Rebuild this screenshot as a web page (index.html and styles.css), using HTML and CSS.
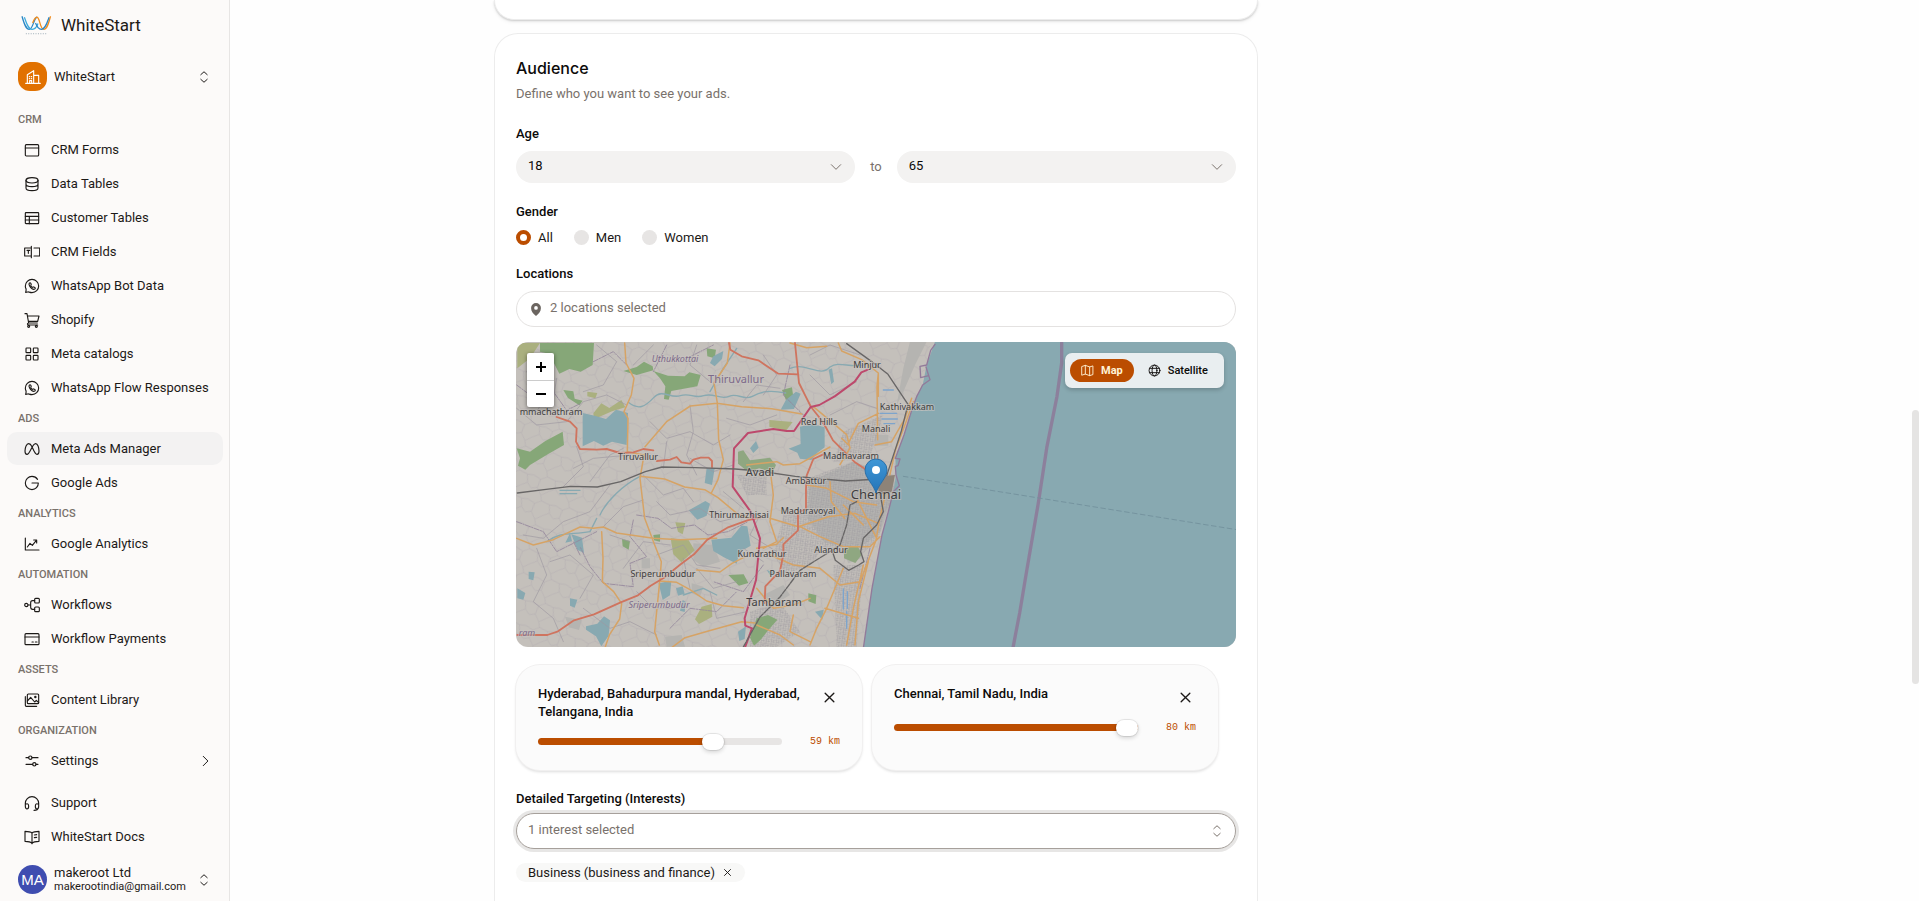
FILE: index.html
```html
<!DOCTYPE html>
<html lang="en">
<head>
<meta charset="utf-8">
<title>WhiteStart – Meta Ads Manager</title>
<link rel="stylesheet" href="styles.css">
</head>
<body>
<svg class="defs" aria-hidden="true">
  <symbol id="updown" viewBox="0 0 24 24"><path d="M17.500 8L12 3 6.500 8M17.500 16L12 21l-5.500-5"/></symbol>
  <symbol id="whatsapp" viewBox="0 0 24 24"><path d="M12 22c5.500 0 10-4.500 10-10S17.500 2 12 2 2 6.500 2 12c0 1.400.300 2.700.800 3.900.500 1.100.500 1.700.300 2.600L2.500 21.500l3-.600c.900-.200 1.500-.200 2.500.300 1.200.500 2.600.800 4 .800z"/><path d="M8.600 12.400c-.900-1.500-1.600-3-.800-4.400.700-1 1.800-1.200 2.300-.1l.700 1.600c.300.700-.7 1.400-.6 2 .4 1.100 1.400 2 2.400 2.500.7.200 1.300-.9 2-.6l1.600.8c1.100.500.8 1.600-.1 2.300-2.400 1.700-6-1.200-7.500-4.100z"/></symbol>
  <symbol id="close" viewBox="0 0 24 24"><path d="M4 4l16 16M20 4L4 20"/></symbol>
  <symbol id="down" viewBox="0 0 24 24"><path d="M4 8l8 8 8-8"/></symbol>
</svg>

<aside class="sidebar">
  <a class="brand" href="#">
    <svg class="brand-logo" viewBox="0 0 32 22" aria-hidden="true">
      <path d="M1 2C3 9 5 15.500 8.500 15.500c4 0 5-12.500 8-12.500" stroke="#2b86c5"/>
      <path d="M3.500 3c2 6 4 12.500 8 12.500 3 0 5-3 6-6" stroke="#39a9dc"/>
      <path d="M12 9c1.500-4 2.500-6 4.500-6" stroke="#f28c1c"/>
      <path d="M16.500 3c3 0 3 12.500 7 12.500 3.500 0 5-6.500 7-13.500" stroke="#f28c1c"/>
      <path d="M15 9c1.500 4 3.500 6.500 6 6.500 4 0 6-7 8-12.500" stroke="#2b86c5"/>
      <path d="M5 20h22" stroke="#9aa9b5" stroke-width="1" stroke-dasharray="1 1.500"/>
    </svg>
    <span>WhiteStart</span>
  </a>
  <button class="account" type="button">
    <span class="avatar avatar-org"><svg class="icon" viewBox="0 0 24 24" aria-hidden="true"><path d="M1 21.500h22M3.500 21.500V8.500L13 2.500v19M13 9.500h7.500v12M6.500 11.500h.5M9.500 11.500h.5M6.500 14.500h.5M9.500 14.500h.5M7 21v-3.500h3V21"/></svg></span>
    <span class="account-name">WhiteStart</span>
    <svg class="icon small" aria-hidden="true"><use href="#updown"/></svg>
  </button>

  <nav class="nav" aria-label="Main">
    <h2>CRM</h2>
    <a href="#"><svg class="icon" viewBox="0 0 24 24"><rect x="2" y="4" width="20" height="17" rx="1.500"/><path d="M2 9h20"/></svg>CRM Forms</a>
    <a href="#"><svg class="icon" viewBox="0 0 24 24"><ellipse cx="12" cy="6.500" rx="9" ry="4"/><path d="M3 6.500v5.500c0 2.200 4 4 9 4s9-1.800 9-4V6.500M3 12v6c0 2.200 4 4 9 4s9-1.800 9-4v-6"/></svg>Data Tables</a>
    <a href="#"><svg class="icon" viewBox="0 0 24 24"><rect x="2" y="4" width="20" height="16.500" rx="1"/><path d="M2 9.500h20M2 15h20M8 9.500v11"/></svg>Customer Tables</a>
    <a href="#"><svg class="icon" viewBox="0 0 24 24"><path d="M11 6H1v12h10M15 6h8.500v12H15M11 3.500v17M4.500 9.500h4M6.500 9.500v4.500"/></svg>CRM Fields</a>
    <a href="#"><svg class="icon" aria-hidden="true"><use href="#whatsapp"/></svg>WhatsApp Bot Data</a>
    <a href="#"><svg class="icon" viewBox="0 0 24 24"><path d="M1.500 2.500h3l2.500 14h13M5.500 6h17l-2 8H7M7 16.500c-2.500.3-2.500 3 0 3h13.500"/><circle cx="7" cy="21.500" r="1.500"/><circle cx="18.500" cy="21.500" r="1.500"/></svg>Shopify</a>
    <a href="#"><svg class="icon" viewBox="0 0 24 24"><rect x="3" y="3" width="7" height="7" rx="1"/><rect x="14" y="3" width="7" height="7" rx="1"/><rect x="3" y="14" width="7" height="7" rx="1"/><rect x="14" y="14" width="7" height="7" rx="1"/></svg>Meta catalogs</a>
    <a href="#"><svg class="icon" aria-hidden="true"><use href="#whatsapp"/></svg>WhatsApp Flow Responses</a>
    <h2>ADS</h2>
    <a class="active" aria-current="page" href="#"><svg class="icon" viewBox="0 0 24 24"><path d="M12 8.500C10.500 5.500 8.800 4 7 4 3.800 4 1.500 9.500 1.500 15c0 3 1 5 3 5 4.500 0 7.500-16 13-16 3 0 5 5.500 5 11 0 3-1 5-3 5-3 0-5-6-7.500-11.500z"/></svg>Meta Ads Manager</a>
    <a href="#"><svg class="icon" viewBox="0 0 24 24"><path d="M20.300 6.500C18.600 3.800 15.500 2 12 2 6.500 2 2 6.500 2 12s4.500 10 10 10 9.500-4.500 9.500-10H12"/></svg>Google Ads</a>
    <h2>ANALYTICS</h2>
    <a href="#"><svg class="icon" viewBox="0 0 24 24"><path d="M2 3v18h20.500M5 16.500l4-5.500 3.500 3 6-7.500M14.500 6h4.500v4.500"/></svg>Google Analytics</a>
    <h2>AUTOMATION</h2>
    <a href="#"><svg class="icon" viewBox="0 0 24 24"><circle cx="3.500" cy="12" r="2.500"/><rect x="16" y="2" width="7" height="7" rx="1.500"/><rect x="16" y="15" width="7" height="7" rx="1.500"/><path d="M6 12h4M16 5.500h-3c-2 0-3 1-3 3v7c0 2 1 3 3 3h3"/></svg>Workflows</a>
    <a href="#"><svg class="icon" viewBox="0 0 24 24"><rect x="1.500" y="4" width="21" height="16.500" rx="1.500"/><path d="M1.500 9h21M12 16.500h2M17 16.500h2.500"/></svg>Workflow Payments</a>
    <h2>ASSETS</h2>
    <a href="#"><svg class="icon" viewBox="0 0 24 24"><rect x="5" y="3" width="17" height="14.500" rx="1.500"/><path d="M2 7v13c0 1 .5 1.500 1.500 1.500h15.500M5 13.500l5-5.500 6 7 2.500-2.500 3.500 3.500"/><circle cx="17" cy="7.500" r="1"/></svg>Content Library</a>
    <h2>ORGANIZATION</h2>
    <a href="#"><svg class="icon" viewBox="0 0 24 24"><path d="M3 7h4M12 7h9M3 17h10M18 17h3"/><circle cx="9.500" cy="7" r="2.500"/><circle cx="15.500" cy="17" r="2.500"/></svg>Settings<svg class="icon small nav-more" viewBox="0 0 24 24"><path d="M9 4l8 8-8 8"/></svg></a>
  </nav>

  <nav class="nav nav-help" aria-label="Help">
    <a href="#"><svg class="icon" viewBox="0 0 24 24"><path d="M2 17v-4.500a10 10 0 0 1 20 0V17M2 14c4-2 5 0 5 3s-1 4-2.500 4S2 19 2 17M22 14c-4-2-5 0-5 3s1 4 2.500 4S22 19 22 17M21 20c0 2-2 3-6 3"/></svg>Support</a>
    <a href="#"><svg class="icon" viewBox="0 0 24 24"><path d="M12 6v16M12 6c-2-2-5-2.500-10.500-2.500v15C7 18.500 10 19 12 21.500c2-2.500 5-3 10.500-3v-15C17 3.500 14 4 12 6zM15.500 9l3.500-.5M15.500 13l3.500-.5"/></svg>WhiteStart Docs</a>
  </nav>
  <button class="account account-user" type="button">
    <span class="avatar avatar-user">MA</span>
    <span class="account-name">makeroot Ltd<small>makerootindia@gmail.com</small></span>
    <svg class="icon small" aria-hidden="true"><use href="#updown"/></svg>
  </button>
</aside>

<main class="main">
  <div class="columns">
    <div class="form-column">
      <section class="card card-prev" aria-hidden="true"></section>
      <section class="card card-audience">
        <header>
          <h1>Audience</h1>
          <p>Define who you want to see your ads.</p>
        </header>
        <form class="fields">
          <div class="field age">
            <label for="age-from">Age</label>
            <div class="age-row">
              <div class="select"><select id="age-from"><option>18</option></select><svg class="icon small" aria-hidden="true"><use href="#down"/></svg></div>
              <span>to</span>
              <div class="select"><select aria-label="Maximum age"><option>65</option></select><svg class="icon small" aria-hidden="true"><use href="#down"/></svg></div>
            </div>
          </div>
          <fieldset class="field">
            <legend>Gender</legend>
            <div class="radios">
              <label><input type="radio" name="gender" checked>All</label>
              <label><input type="radio" name="gender">Men</label>
              <label><input type="radio" name="gender">Women</label>
            </div>
          </fieldset>
          <div class="field">
            <label for="locations">Locations</label>
            <div class="textbox">
              <svg class="pin-icon" viewBox="0 0 12 14" aria-hidden="true"><path fill-rule="evenodd" d="M6 0a5.300 5.300 0 0 0-5.300 5.300C.700 9 3 11.500 6 14c3-2.500 5.300-5 5.300-8.700A5.300 5.300 0 0 0 6 0zm0 3.300a2 2 0 1 1 0 4 2 2 0 0 1 0-4z"/></svg>
              <input id="locations" type="text" placeholder="2 locations selected">
            </div>
          </div>

          <div class="map">
            <svg class="map-tiles" viewBox="0 0 720 305" preserveAspectRatio="xMidYMid slice" role="img" aria-label="Map of Chennai">
              <defs>
                <pattern id="streets" width="15" height="13" patternUnits="userSpaceOnUse" patternTransform="rotate(8)"><path d="M0 3h15M4 0v13M11 3v10M4 9h11" fill="none" stroke="#9b999c" stroke-width="1.200"/></pattern>
                <pattern id="lanes" width="86" height="74" patternUnits="userSpaceOnUse" patternTransform="rotate(14)"><path d="M0 20l22 8 18-12 26 6 20-2M22 28l-4 26 16 20M66 22l6 24-18 12-20 16M18 54L0 60M72 46l14 14M40 16L34 0" fill="none" stroke="#aea8ae" stroke-width="1.300"/></pattern>
                <linearGradient id="pin" x1="0" y1="0" x2="0" y2="1"><stop offset="0" stop-color="#3f97d6"/><stop offset="1" stop-color="#2474b8"/></linearGradient>
              </defs>
              <rect width="720" height="305" fill="#c4c0bb"/>
              <g transform="translate(-6 -7) scale(.33333)" stroke-linecap="round" stroke-linejoin="round">
                <path fill="url(#lanes)" d="M18 20H1260V940H18z"/>
                <g fill="#b5b4b1">
                  <path d="M900 440l130-60 120 40 12 50-30 60-20 60-80 60-90-30-50-70z"/>
                  <path d="M1180 170l35-80 35-70h-50l-20 80-20 110zM1095 300h40v32h-40z"/>
                  <path d="M550 625l60 5 20 50-50 15-30-20zM395 670h25v30h-25zM165 845l50 10-8 30-30-8zM465 905l50-5 10 35h-55zM545 745l35 10-10 30-25-10zM760 780l60-30 20 30-50 30zM1000 650l45-20 10 40-40 15z"/>
                </g>
                <path fill="url(#streets)" d="M895 430l130-50 110 40 24 50-34 62-20 78-60 60-130-40-30-80zM680 420h90v60h-60zM1000 290l120-50-40 130-110 10zM820 540l90-10 60 60-60 90-80 40-40-60zM970 690h90l-20 245h-60zM720 830l90-30 60 90-70 45h-80z"/>
                <g fill="#86a778">
                  <path d="M90 24h162l-4 66-36 20-34-8-30 14-30-60-28-6z"/>
                  <path d="M340 108l40-12 22-16 26 14 2 12-50 14zM430 108l44 14 50 2 14-12 34 8-10 34-78 14-8 26-14-2 4-38-16-24z"/>
                  <path d="M20 340l40 10 46-32 52-28 4 40-46 26-56 34-14 14-22-12 6-22zM160 165l30 4 4 22 24 6-10 14-34-22zM336 612l24 6-4 26-18-10zM655 720l46-2 14 26-28 8z"/>
                  <path d="M740 850l34-10 28 14-26 30-24 30-20 18-12-24zM895 775l24 6-2 26-22-8zM816 165l30-8 4 30-20 14zM590 40l28 4-4 26-22-6zM430 600l20-2v22l-18-4z"/>
                </g>
                <g fill="#aab07f">
                  <path d="M22 24h68l-30 46-38 30zM250 235l24-30 24 14 36-24 12 22-40 12-54 24zM778 255l70 6-20 26-50-12zM482 610l54 6 18 30-40 36-24-24zM575 815l30-8 2 38-40 22-12-14zM496 562l30 2-8 34-14-8zM232 170l30 4-6 16-24-6z"/>
                </g>
                <path fill="#8fa781" d="M684 350l16-4 20 30 60-8 18 22-10 22-40-12-34 10-30-24zM1002 640l40-8 14 26-20 26-34-14z"/>
                <g fill="#88a9b1">
                  <path d="M218 234l36 8 34 10 30-28 36 10-4 96-44-10-26 12-28-14-34 16z"/>
                  <path d="M870 275l38-8 36 10v60l-22 16-18 22-34-4-8-18-26-12 36-14zM604 614l60-6 30-36 18 2 10 58-34 20-8 34-40-20-30-18z"/>
                  <path d="M536 526l50-28 14 8-10 36-28 12zM600 84l10-20 30-16-4 24-22 22zM812 224l16-30 30-24 14 6-20 46zM184 598l32 10 6 46-20-10zM180 595l6 24-20 4zM590 400h24l-8 50-22-6zM228 874l34-8 20-22 18 12-4 46-22 32-16-30-30-20zM446 745l38-8-4 44-22 14zM56 710l18 2-4 24-14-4zM22 760l24 14-6 20-18-4zM720 340l18-22 8 20-16 16zM956 104l10-4 6 40-8 8zM180 790l22 4-8 24-14-6zM498 760l20-6 6 22-20 6zM518 795l10 6-4 30-14-4zM684 890l24-16-4 38-16 6zM915 830l26-6-4 30zM770 705l24 8-12 10z"/>
                  <path d="M1275 20L1250 90 1238 150 1220 185 1207 220 1182 300 1156 370 1158 420 1150 470 1135 530 1116 600 1101 680 1086 760 1073 850 1060 940H2250V20z"/>
                </g>
                <g fill="none" stroke="#88a9b1" stroke-width="4">
                  <path d="M355 202c30 24 50 14 76-14s50 4 80-6 40 10 70 0 50 14 76 2 44 14 70 0 50-20 100-10M840 100c50-20 90 30 120-4 30-20 60 6 110-8M600 170l40-70 40-60M270 540c20-44 70-90 120-116M260 550l-20 40M240 590c-60 10-90 0-130 30M150 466h60M150 476h50M520 780l60-20 40 20"/>
                  <path stroke="#7da4cc" d="M1110 235h50M1116 252h46M1122 266h32M1000 762v60M1012 770v50M1010 830v50M1120 165h30"/>
                </g>
                <g fill="none" stroke="#94859b" stroke-width="2.500" stroke-dasharray="16 4 4 4">
                  <path d="M20 150l40 30 60-24 50 70 40-20M250 80l60-30 40 40M530 70l80-40M380 540l64 10 40 30 70-10 40 30 60-10 60-30M370 555l-10 50 50 60-50 20 10 70-90-10-40-50-30-60M210 660l-20-40M20 560l80 30 40 60 120-60M470 30l-40 80M1080 640l-30 120M760 690l-60 80-90-30M480 880l60-60 80 10 60-60M840 90l-20 90 60 60"/>
                </g>
                <g fill="none" stroke="#9e99a1" stroke-width="2">
                  <path d="M20 220l60 50 90-10 50-60 70-20 60 30M50 110l60 70-30 50M130 190l10-60M190 400l60-30 110-10M160 455l60-60-20-60M240 440l60-80 40-20M300 450l-60 80-80 30-60 50-60-10M280 575l60-60 60-20M420 260l50 50 70-20 70 40 50-30M540 210l10 80-20 70 30 60M470 320l-10 80M400 420l60 60 60-20 30 40M440 500l40 40 90-20 60 40 80-20M300 600l60 20M340 700l60-80 80 10M120 680l60-20 70 60-40 70M80 640l30 80-40 80 60 50 30 70M220 820l80 60 60-20 80 40M440 660l80-30 40 60 70 10M520 670l20 90M560 700l50 60 70-20M600 770l20 80 90-20M380 770l50 50 60 0M700 200l40-50 70 10M650 250l70 20 80-30M760 60l40 60-40 60M900 120l60 60 80-40M700 640l60 40M640 470l60 50M540 370l70 40 60-20M260 30l60 50-40 70-60 20M430 30l-60 60M560 30l-20 60 60 50M960 240l80-40 60 20M750 540l-30 60 80 50M900 60l60-30 90 30"/>
                </g>
                <g fill="none" stroke="#d6a365" stroke-width="4.500">
                  <path d="M344 24l4 60 24 46-8 50-22 50 12 20-2 100 50 10-12 70 14 120 30 80 20 50-4 50-16 160 14 40M405 335l66-76 70-46 80-8 74 10 90 6 90 16M660 24l-8 60-40 60 10 60 4 110 14 60-16 60-20 40M390 424l74 8 60 24 60 8 40 24 60 50 40 14M20 610l50 20 60-16 80-38 40 4 30-4 40 18 110 16 80 4 110-4M275 590l4 80-2 70 34 30 24 36-6 46-30 46-14 40M560 705l70 6 36-26 40-20M450 738l50 4 40 22 50 34 50 14 60 6M485 938l40-30 70-20 100-28 40 4M840 24l50 14 60-4M985 24l10 24 60 26 50 40-4 40 2 160M1105 114v70M910 215l60 50 40 34 10 40-30 50M1015 330l-20-20M1015 325l30-60 60-30M780 400l10 80-10 80 20 60-40 20M710 390l90-10 20 10 50-4 90-50M890 450l60 10 80 40 70 10M960 440l4 60 40 50M870 575l60 30 70 30 80 0 30-30M865 575l90-30 80-10 70 30M1040 490l60 120M1060 570l-60-60M740 640l60-12 20-20M780 550l80 24M780 660l70 30 80 10 60 50 60-10M1000 700l-50 120-30 60-20 50M1075 680l-30 120-10 130M1060 690l-30 130-20 110M945 820l100 30M850 840l-10 50 60 30M740 870l70 30 40 30M740 760l50 60 60-10 50-20M1205 190l-20 60-40 70-50 10M1210 200l-24 66-30 80-20 90-14 60-14 60-10 60-50 130"/>
                </g>
                <g fill="none" stroke="#cf745f" stroke-width="5.500">
                  <path d="M657 24l4 20 34 20 50 12 60 40 60 2M855 24l6 60 6 60 20 40 16 32 24 30 20 30 22 40 66 66 60 40M140 246l40 14 20 20-2 40 12 22 50 2 30-2 40 12 40-2 30-10 30 4M440 378l40-4 20-8 14 16 26 4 10-12 22-6h24l10 10v18M22 900h90l30-10 50-34 60-18 80-36 50-20 40-30 40-24 50-40 40-30 40-44 60-36 60-22 42-10M940 358l-30 14-20 50-2 40v60l-24 10v54l-44 42v30l-10 50-44 46-2 50"/>
                </g>
                <path d="M1074 104L1054 112 1034 140 974 184 928 210 902 216 852 288 830 288 790 282 714 294 672 340 668 455 722 530 750 610 738 735 704 850 706 872 726 880 704 940" fill="none" stroke="#bd496c" stroke-width="6"/>
                <g fill="none" stroke="#686666" stroke-width="4">
                  <path d="M22 474l80-10 80-10 80 2 70-16 74-30 50-14 100 2 120 4 70 6 110 16 150 14 100-6M1010 26l70 50 54 42 60 90-20 80-36 110-20 60M1104 440l16 90-20 40-40 40-8 40 10 30-16 10-30 16-40-30-10-30"/>
                  <path d="M1040 500l-20 10-10 60-20 60-40 26-80 50-60 80-60 60-50 90" stroke-dasharray="16 4"/>
                </g>
                <path d="M1105 425l50-5-10 50-38 10z" fill="#8d8378"/>
                <path d="M1275 28L1262 46 1250 90 1230 94 1232 128 1256 122 1248 96 1260 134 1238 150 1220 185 1207 220 1182 300 1156 370 1170 372 1164 392 1156 394 1158 420 1168 452 1150 470 1135 530 1116 600 1101 680 1086 760 1073 850 1060 940" fill="none" stroke="#927a9a" stroke-width="4"/>
                <path d="M1655 24v60l-14 100-30 150-26 170-36 210-20 120-20 104" fill="none" stroke="#8d7597" stroke-width="10" opacity=".8"/>
                <path d="M1180 424L2180 584" fill="none" stroke="#718f9b" stroke-width="2.500" stroke-dasharray="14 10"/>
              </g>
              <g class="map-labels">
                <text class="region" x="159" y="20">Uthukkottai</text>
                <text class="district" x="220" y="41">Thiruvallur</text>
                <text x="351" y="26">Minjur</text>
                <text x="35" y="73">mmachathram</text>
                <text x="122" y="118">Tiruvallur</text>
                <text x="303" y="83">Red Hills</text>
                <text x="360" y="90">Manali</text>
                <text x="391" y="68">Kathivakkam</text>
                <text x="335" y="117">Madhavaram</text>
                <text class="town" x="244" y="134">Avadi</text>
                <text x="290" y="142">Ambattur</text>
                <text class="city" x="360" y="157">Chennai</text>
                <text x="292" y="172">Maduravoyal</text>
                <text x="223" y="176">Thirumazhisai</text>
                <text x="315" y="211">Alandur</text>
                <text x="246" y="215">Kundrathur</text>
                <text x="277" y="235">Pallavaram</text>
                <text x="147" y="235">Sriperumbudur</text>
                <text class="region" x="143" y="266">Sriperumbudur</text>
                <text class="town" x="258" y="264">Tambaram</text>
                <text class="region" x="11" y="294">ram</text>
              </g>
              <path d="M360 151c-2-8-11-15-11-23a11 11 0 0 1 22 0c0 8-9 15-11 23z" fill="url(#pin)" stroke="#2a6fa8"/>
              <circle cx="360" cy="128" r="4" fill="#fff"/>
            </svg>
            <div class="zoom">
              <button type="button" aria-label="Zoom in"><svg viewBox="0 0 12 12"><path d="M6 1v10M1 6h10"/></svg></button>
              <button type="button" aria-label="Zoom out"><svg viewBox="0 0 12 12"><path d="M1 6h10"/></svg></button>
            </div>
            <div class="layers">
              <button class="on" type="button"><svg class="icon" viewBox="0 0 24 24"><path d="M2 4.500l6-2 8 3 6-2v16l-6 2-8-3-6 2zM8 2.500v16M16 5.500v16"/></svg>Map</button>
              <button type="button"><svg class="icon" viewBox="0 0 24 24"><circle cx="12" cy="12" r="10"/><ellipse cx="12" cy="12" rx="4.500" ry="10"/><path d="M3 8h18M3 16h18"/></svg>Satellite</button>
            </div>
          </div>

          <div class="places">
            <article class="place">
              <div class="place-head"><label for="radius-1">Hyderabad, Bahadurpura mandal, Hyderabad, Telangana, India</label><button type="button" aria-label="Remove Hyderabad"><svg class="icon" aria-hidden="true"><use href="#close"/></svg></button></div>
              <div class="radius"><input id="radius-1" type="range" min="0" max="80" value="59" style="--fill:74%"><output for="radius-1">59 km</output></div>
            </article>
            <article class="place">
              <div class="place-head"><label for="radius-2">Chennai, Tamil Nadu, India</label><button type="button" aria-label="Remove Chennai"><svg class="icon" aria-hidden="true"><use href="#close"/></svg></button></div>
              <div class="radius"><input id="radius-2" type="range" min="0" max="80" value="80" style="--fill:100%"><output for="radius-2">80 km</output></div>
            </article>
          </div>

          <div class="field field-interests">
            <label for="interests">Detailed Targeting (Interests)</label>
            <div class="textbox focused">
              <input id="interests" type="text" placeholder="1 interest selected">
              <svg class="icon small" aria-hidden="true"><use href="#updown"/></svg>
            </div>
            <span class="tag">Business (business and finance)<button type="button" aria-label="Remove Business"><svg class="icon" aria-hidden="true"><use href="#close"/></svg></button></span>
          </div>
        </form>
      </section>
    </div>
  </div>
  <div class="scroll-thumb"></div>
</main>
</body>
</html>
```
FILE: styles.css
```css
* { box-sizing: border-box; }

body {
  margin: 0;
  display: flex;
  height: 100vh;
  overflow: hidden;
  background: #fefefe;
  color: #1c1917;
  font: 13px/18px Roboto, "Liberation Sans", sans-serif;
}

button, input, select { font: inherit; color: inherit; }
button { padding: 0; border: 0; background: none; cursor: pointer; }
a { color: inherit; text-decoration: none; }
.defs { position: absolute; width: 0; height: 0; }

.icon {
  flex: none;
  width: 16px;
  height: 16px;
  fill: none;
  stroke: currentColor;
  stroke-width: 1.7;
  stroke-linecap: round;
  stroke-linejoin: round;
}
.icon.small { width: 14px; height: 14px; }

/* Sidebar */
.sidebar {
  flex: none;
  display: flex;
  flex-direction: column;
  width: 230px;
  padding: 11px 6px 3px 7px;
  background: #fcfaf9;
  border-right: 1px solid #e7e5e4;
}
.brand {
  display: flex;
  align-items: center;
  gap: 9px;
  height: 28px;
  padding-left: 14px;
  font-size: 17px;
}
.brand-logo { width: 31px; height: 22px; fill: none; stroke-width: 1.3; }
.account {
  display: flex;
  align-items: center;
  gap: 7px;
  width: 100%;
  margin-top: 19px;
  padding: 4px 11px;
  text-align: left;
}
.account .small { margin-right: 1px; }
.account-name { flex: 1; line-height: 15px; }
.account-name small { display: block; font-size: 11px; line-height: 14px; }
.avatar {
  display: grid;
  place-items: center;
  width: 29px;
  height: 29px;
  color: #fff;
}
.avatar-org { border-radius: 12px; background: #e17100; }
.avatar-user { border-radius: 50%; background: #3f4db0; font: 15px "Liberation Sans", sans-serif; }

.nav { margin-top: 11px; }
.nav h2 {
  margin: 0;
  padding-left: 11px;
  color: #79716b;
  font-size: 11px;
  font-weight: 500;
  line-height: 27px;
}
.nav a {
  display: flex;
  align-items: center;
  gap: 11px;
  height: 33px;
  margin-bottom: 1px;
  padding: 0 11px 0 17px;
  border-radius: 10px;
}
.nav a.active { background: #f3f2f2; }
.nav-more { margin-left: auto; }
.nav-help { margin-top: auto; }
.account-user { margin-top: 7px; }

/* Content */
.main { position: relative; flex: 1; display: flex; justify-content: center; padding-right: 5px; }
.columns {
  display: grid;
  grid-template-columns: minmax(0, 1fr) 368px;
  gap: 24px;
  width: 100%;
  max-width: 1156px;
}
.form-column { display: flex; flex-direction: column; gap: 13px; height: 100vh; }
.card { border: 1px solid #ececec; border-radius: 24px; background: #fff; }
.card-prev {
  flex: none;
  height: 20px;
  border-top: 0;
  border-radius: 0 0 24px 24px;
  box-shadow: 0 1px 2px rgb(0 0 0 / 16%), 0 2px 4px rgb(0 0 0 / 6%);
}
.card-audience {
  flex: 1;
  padding: 22px 21px 0;
  border-bottom: 0;
  border-radius: 24px 24px 0 0;
}
.card h1 { margin: 0; font: 500 16px/24px Inter, sans-serif; color: #0c0a09; }
.card p { margin: 4px 0 21px; line-height: 20px; color: #79716b; }
.field { display: flex; flex-direction: column; gap: 8px; margin: 0 0 20px; padding: 0; border: 0; }
.field > label, legend, .place label { padding: 0; font-weight: 500; color: #0c0a09; }
legend { margin-bottom: 9px; }

.age-row { display: flex; align-items: center; gap: 15px; color: #79716b; }
.select { position: relative; flex: 1; }
.select select {
  display: block;
  width: 100%;
  height: 32px;
  padding: 0 12px 2px;
  border: 0;
  border-radius: 16px;
  background: #f3f2f1;
  color: #0c0a09;
  appearance: none;
}
.select .icon { position: absolute; right: 12px; top: 9px; pointer-events: none; }

.radios { display: flex; gap: 21px; }
.radios label { display: flex; align-items: center; gap: 7px; line-height: 15px; }
.radios input {
  width: 15px;
  height: 15px;
  margin: 0;
  border-radius: 50%;
  background: #e7e5e4;
  appearance: none;
}
.radios input:checked { border: 4px solid #bb4d00; background: #fff; }

.textbox {
  display: flex;
  align-items: center;
  gap: 8px;
  height: 36px;
  padding: 0 11px;
  border: 1px solid #e4e2e1;
  border-radius: 18px;
  background: #fff;
  color: #79716b;
}
.textbox input { flex: 1; padding: 0 0 2px; border: 0; outline: 0; background: none; }
.textbox input::placeholder { color: #79716b; opacity: 1; }
.pin-icon { width: 12px; height: 13px; margin-left: 2px; fill: #6b6560; }
.textbox.focused { border-color: #a6a09b; box-shadow: 0 0 0 3px #e7e6e5; }

/* Map */
.map {
  position: relative;
  height: 305px;
  margin-top: -5px;
  border-radius: 12px;
  overflow: hidden;
}
.map-tiles { display: block; width: 100%; height: 100%; }
.map-labels {
  fill: #3f3e40;
  font: 9px "Noto Sans", sans-serif;
  text-anchor: middle;
  paint-order: stroke;
  stroke: #c9c5c1;
  stroke-opacity: .6;
  stroke-width: 2px;
}
.map-labels .region { fill: #7d6a8a; font-style: italic; }
.map-labels .district { fill: #7d6a8a; font-size: 11px; }
.map-labels .town { font-size: 11px; }
.map-labels .city { font-size: 13px; }
.zoom {
  position: absolute;
  top: 11px;
  left: 11px;
  width: 27px;
  border-radius: 2px;
  background: #fff;
  box-shadow: 0 1px 4px rgb(0 0 0 / 50%);
}
.zoom button { display: grid; place-items: center; width: 27px; height: 27px; }
.zoom button + button { border-top: 1px solid #ccc; }
.zoom svg { width: 12px; height: 12px; stroke: #000; stroke-width: 2; }
.layers {
  position: absolute;
  top: 11px;
  right: 12px;
  display: flex;
  align-items: center;
  width: 159px;
  height: 35px;
  padding: 0 5px;
  border-radius: 7px;
  background: #e9eef0;
  box-shadow: 0 2px 4px rgb(0 0 0 / 20%);
  color: #0c0a09;
  font-size: 11px;
  font-weight: 500;
}
.layers button { display: flex; align-items: center; gap: 7px; height: 23px; padding: 0 11px; border-radius: 12px; }
.layers button + button { padding-left: 14px; }
.layers .on { background: #bb4d00; color: #fff3d6; font-weight: 700; }
.layers .icon { width: 13px; height: 13px; }

/* Selected places */
.places {
  display: grid;
  grid-template-columns: 1fr 1fr;
  gap: 10px;
  margin: 18px 18px 20px 0;
}
.place {
  min-height: 105px;
  padding: 20px 22px;
  border-radius: 24px;
  background: #fbfbfb;
  box-shadow: 0 0 0 1px #f1f0f0, 0 2px 3px rgb(0 0 0 / 14%);
}
.place-head { display: flex; align-items: flex-start; justify-content: space-between; min-height: 22px; }
.place-head label { max-width: 272px; }
.place-head button { display: grid; place-items: center; width: 22px; height: 22px; padding-top: 2px; }
.place-head .icon { width: 13px; height: 13px; stroke-width: 2.5; }
.radius { display: flex; align-items: center; gap: 12px; height: 16px; margin-top: 12px; }
.radius input {
  flex: 1;
  min-width: 0;
  height: 16px;
  margin: 0;
  background: none;
  appearance: none;
}
.radius input::-webkit-slider-runnable-track {
  height: 7px;
  border-radius: 4px;
  background: linear-gradient(to right, #bb4d00 var(--fill), #e7e5e4 var(--fill));
}
.radius input::-webkit-slider-thumb {
  width: 22px;
  height: 16px;
  margin-top: -4px;
  border-radius: 8px;
  background: #fff;
  box-shadow: 0 0 0 1px rgb(0 0 0 / 8%), 0 2px 4px rgb(0 0 0 / 16%);
  appearance: none;
}
.radius output { width: 46px; color: #bb4d00; font: 10px "Liberation Mono", monospace; text-align: right; }

.field-interests { gap: 5px; }
.tag {
  display: flex;
  align-items: center;
  gap: 8px;
  align-self: flex-start;
  height: 19px;
  margin-top: 9px;
  padding: 0 13px 0 12px;
  border-radius: 10px;
  background: #f8f8f7;
}
.tag button { display: flex; }
.tag .icon { width: 9px; height: 9px; stroke-width: 2.5; }

.scroll-thumb {
  position: absolute;
  top: 410px;
  right: 0;
  width: 7px;
  height: 274px;
  border-radius: 4px;
  background: #e5e4e3;
}
```
